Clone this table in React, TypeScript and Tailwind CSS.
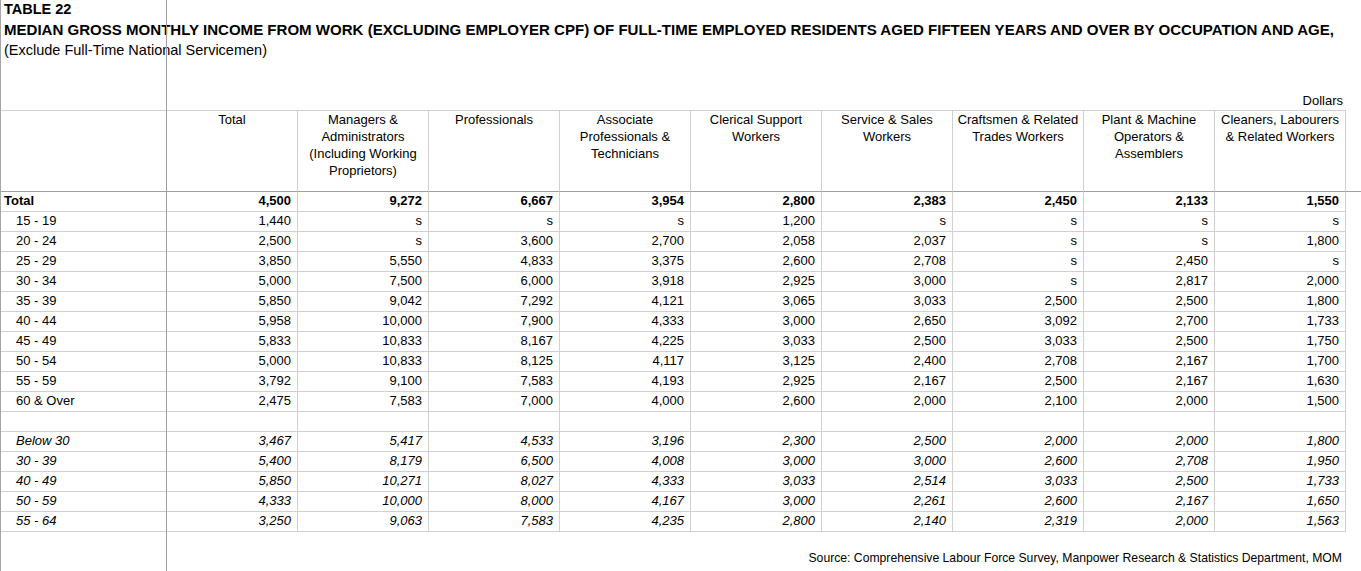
import React from 'react';

const headers = [
  ['Total'],
  ['Managers &', 'Administrators', '(Including Working', 'Proprietors)'],
  ['Professionals'],
  ['Associate', 'Professionals &', 'Technicians'],
  ['Clerical Support', 'Workers'],
  ['Service & Sales', 'Workers'],
  ['Craftsmen & Related', 'Trades Workers'],
  ['Plant & Machine', 'Operators &', 'Assemblers'],
  ['Cleaners, Labourers', '& Related Workers'],
];

type Row = { label: string; values: string[]; kind?: 'total' | 'italic' | 'blank' };

const rows: Row[] = [
  { label: 'Total', kind: 'total', values: ['4,500', '9,272', '6,667', '3,954', '2,800', '2,383', '2,450', '2,133', '1,550'] },
  { label: '15 - 19', values: ['1,440', 's', 's', 's', '1,200', 's', 's', 's', 's'] },
  { label: '20 - 24', values: ['2,500', 's', '3,600', '2,700', '2,058', '2,037', 's', 's', '1,800'] },
  { label: '25 - 29', values: ['3,850', '5,550', '4,833', '3,375', '2,600', '2,708', 's', '2,450', 's'] },
  { label: '30 - 34', values: ['5,000', '7,500', '6,000', '3,918', '2,925', '3,000', 's', '2,817', '2,000'] },
  { label: '35 - 39', values: ['5,850', '9,042', '7,292', '4,121', '3,065', '3,033', '2,500', '2,500', '1,800'] },
  { label: '40 - 44', values: ['5,958', '10,000', '7,900', '4,333', '3,000', '2,650', '3,092', '2,700', '1,733'] },
  { label: '45 - 49', values: ['5,833', '10,833', '8,167', '4,225', '3,033', '2,500', '3,033', '2,500', '1,750'] },
  { label: '50 - 54', values: ['5,000', '10,833', '8,125', '4,117', '3,125', '2,400', '2,708', '2,167', '1,700'] },
  { label: '55 - 59', values: ['3,792', '9,100', '7,583', '4,193', '2,925', '2,167', '2,500', '2,167', '1,630'] },
  { label: '60 & Over', values: ['2,475', '7,583', '7,000', '4,000', '2,600', '2,000', '2,100', '2,000', '1,500'] },
  { label: '', kind: 'blank', values: ['', '', '', '', '', '', '', '', ''] },
  { label: 'Below 30', kind: 'italic', values: ['3,467', '5,417', '4,533', '3,196', '2,300', '2,500', '2,000', '2,000', '1,800'] },
  { label: '30 - 39', kind: 'italic', values: ['5,400', '8,179', '6,500', '4,008', '3,000', '3,000', '2,600', '2,708', '1,950'] },
  { label: '40 - 49', kind: 'italic', values: ['5,850', '10,271', '8,027', '4,333', '3,033', '2,514', '3,033', '2,500', '1,733'] },
  { label: '50 - 59', kind: 'italic', values: ['4,333', '10,000', '8,000', '4,167', '3,000', '2,261', '2,600', '2,167', '1,650'] },
  { label: '55 - 64', kind: 'italic', values: ['3,250', '9,063', '7,583', '4,235', '2,800', '2,140', '2,319', '2,000', '1,563'] },
];

const gridCols = 'grid grid-cols-[166px_repeat(9,131px)_15px]';

export default function App() {
  return (
    <div className="relative w-[1361px] h-[571px] overflow-hidden bg-white border-l border-[#a6a6a6] text-black font-['Liberation_Sans',Arial,sans-serif]">
      {/* title block */}
      <div className="pl-[3px]">
        <div className="h-[20px] flex items-center text-[14.5px] font-bold whitespace-nowrap">TABLE 22</div>
        <div className="h-[20px] flex items-center text-[15.05px] font-bold whitespace-nowrap">
          MEDIAN GROSS MONTHLY INCOME FROM WORK (EXCLUDING EMPLOYER CPF) OF FULL-TIME EMPLOYED RESIDENTS AGED FIFTEEN YEARS AND OVER BY OCCUPATION AND AGE,
        </div>
        <div className="h-[21px] flex items-center text-[14.5px] whitespace-nowrap">(Exclude Full-Time National Servicemen)</div>
      </div>
      <div className="h-[30px]" />
      <div className={`${gridCols} h-[19px] text-[13px]`}>
        <div className="col-start-10 flex items-center justify-end pr-[3px]">Dollars</div>
      </div>

      {/* header row */}
      <div className={`${gridCols} text-[13px] leading-[17px]`}>
        <div className="h-[82px] border-t border-t-[#d0d0d0] border-b border-b-[#9e9e9e] border-r border-r-[#9e9e9e]" />
        {headers.map((h, i) => (
          <div key={i} className="h-[82px] border-t border-t-[#d0d0d0] border-b border-b-[#9e9e9e] border-r border-r-[#d0d0d0] text-center">
            {h.map((line, j) => (
              <div key={j} className="whitespace-nowrap">{line}</div>
            ))}
          </div>
        ))}
        <div className="h-[82px] border-b border-b-[#9e9e9e]" />
      </div>

      {/* data rows */}
      {rows.map((r, i) => (
        <div key={i} className={`${gridCols} text-[13px] ${r.kind === 'total' ? 'font-bold' : ''} ${r.kind === 'italic' ? 'italic' : ''}`}>
          <div className={`h-[20px] pb-[1px] flex items-center border-b border-b-[#d0d0d0] border-r border-r-[#9e9e9e] whitespace-nowrap ${r.kind === 'total' ? 'pl-[3px]' : 'pl-[15px]'}`}>
            {r.label}
          </div>
          {r.values.map((v, j) => (
            <div key={j} className="h-[20px] pb-[1px] flex items-center justify-end pr-[6px] border-b border-b-[#d0d0d0] border-r border-r-[#d0d0d0]">
              {v}
            </div>
          ))}
          <div />
        </div>
      ))}

      {/* source */}
      <div className="pt-[19px] pr-[19px] flex justify-end text-[12.2px] leading-[14px] whitespace-nowrap">
        Source: Comprehensive Labour Force Survey, Manpower Research &amp; Statistics Department, MOM
      </div>

      {/* frozen pane divider and active row marker */}
      <div className="absolute left-[165px] top-0 h-full w-px bg-[#9e9e9e]" />
      <div className="absolute left-[-1px] top-[511px] h-[20px] w-px bg-[#217346]" />
    </div>
  );
}
